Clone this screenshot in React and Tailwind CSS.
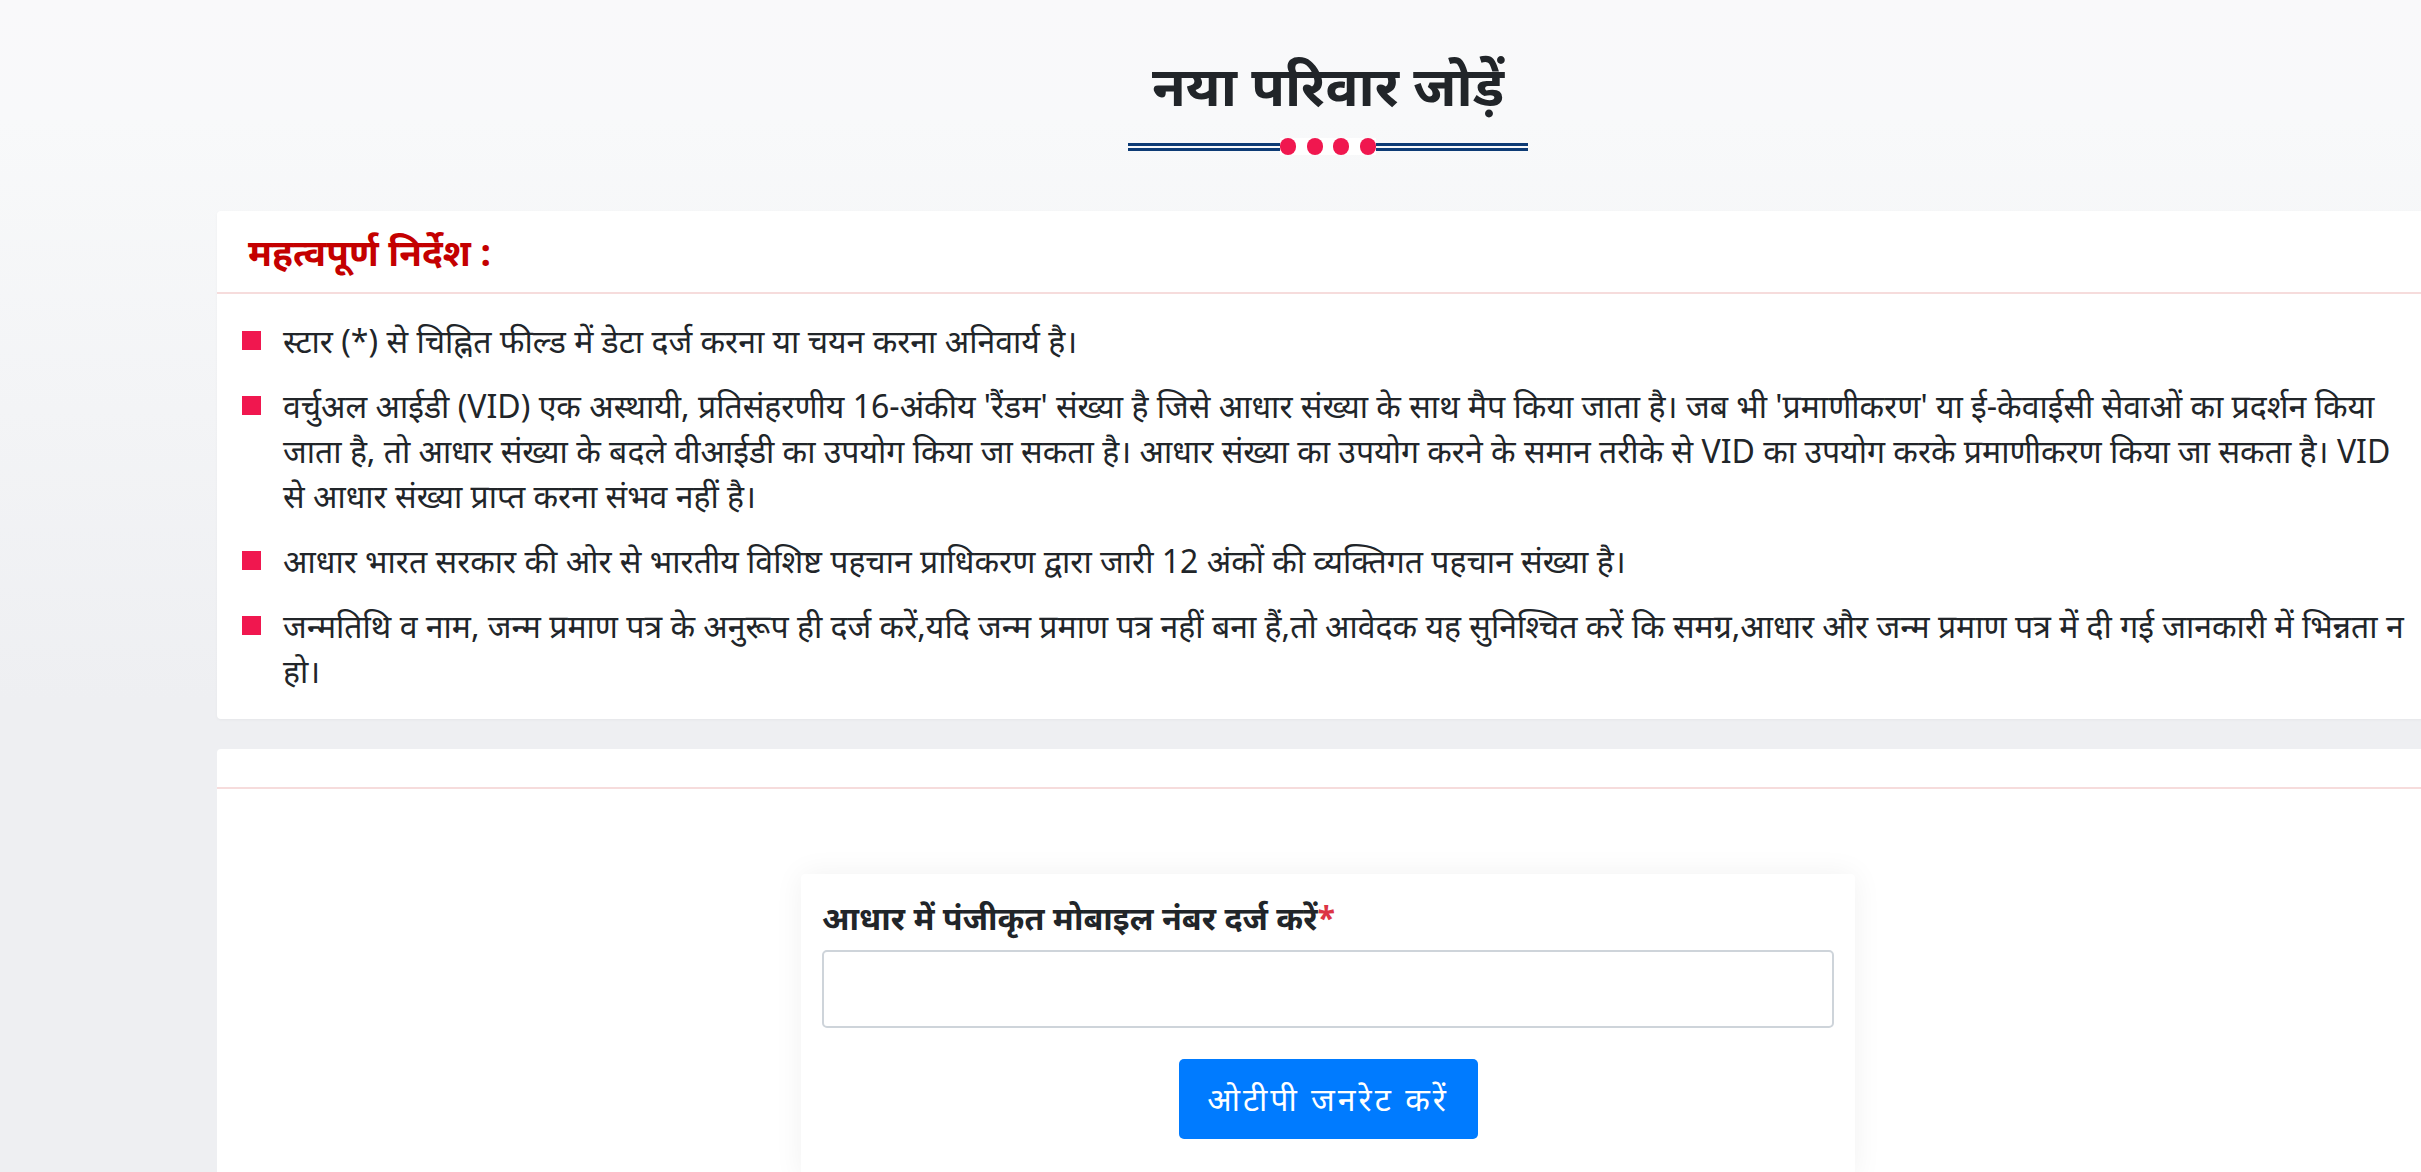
import React from 'react'

const instructions = [
  "स्टार (*) से चिह्नित फील्ड में डेटा दर्ज करना या चयन करना अनिवार्य है।",
  "वर्चुअल आईडी (VID) एक अस्थायी, प्रतिसंहरणीय 16-अंकीय 'रैंडम' संख्या है जिसे आधार संख्या के साथ मैप किया जाता है। जब भी 'प्रमाणीकरण' या ई-केवाईसी सेवाओं का प्रदर्शन किया जाता है, तो आधार संख्या के बदले वीआईडी का उपयोग किया जा सकता है। आधार संख्या का उपयोग करने के समान तरीके से VID का उपयोग करके प्रमाणीकरण किया जा सकता है। VID से आधार संख्या प्राप्त करना संभव नहीं है।",
  "आधार भारत सरकार की ओर से भारतीय विशिष्ट पहचान प्राधिकरण द्वारा जारी 12 अंकों की व्यक्तिगत पहचान संख्या है।",
  "जन्मतिथि व नाम, जन्म प्रमाण पत्र के अनुरूप ही दर्ज करें,यदि जन्म प्रमाण पत्र नहीं बना हैं,तो आवेदक यह सुनिश्चित करें कि समग्र,आधार और जन्म प्रमाण पत्र में दी गई जानकारी में भिन्नता न हो।",
]

const App = () => {
  const [mobile, setMobile] = React.useState('')

  return (
    <div className="w-full h-[1172px] overflow-hidden bg-[linear-gradient(180deg,#f9f9fa_0px,#f8f9fa_120px,#eeeff2_700px)] font-['Noto_Sans','Noto_Sans_Devanagari',sans-serif] text-[#212529]">
      <div className="ml-[217px] w-[2222px]">
        {/* heading */}
        <div className="pt-[52px] flex flex-col items-center">
          <h1 className="text-[55px] leading-[66px] font-bold text-[#212529]">नया परिवार जोड़ें</h1>
          <div className="mt-[20px] w-[400px] h-[17px] flex items-center">
            <div className="flex-1 h-[8px] border-y-[3px] border-[#0d3b75]"></div>
            <div className="bg-white flex gap-[10.5px]">
              <span className="w-[16px] h-[17px] rounded-full bg-[#f0174f]"></span>
              <span className="w-[16px] h-[17px] rounded-full bg-[#f0174f]"></span>
              <span className="w-[16px] h-[17px] rounded-full bg-[#f0174f]"></span>
              <span className="w-[16px] h-[17px] rounded-full bg-[#f0174f]"></span>
            </div>
            <div className="flex-1 h-[8px] border-y-[3px] border-[#0d3b75]"></div>
          </div>
        </div>

        {/* instructions card */}
        <div className="mt-[56px] bg-white rounded-[4px] shadow-[0_1px_3px_rgba(0,0,0,0.04)]">
          <div className="h-[83px] flex items-center px-[31px] border-b-2 border-[#f6dcdc]">
            <h2 className="text-[37px] font-bold text-[#c40000] leading-[1.5]">महत्वपूर्ण निर्देश :</h2>
          </div>
          <ul className="pt-[24px] pb-[26px] pl-[25px] pr-[25px] flex flex-col gap-[20px]">
            {instructions.map((item, index) => (
              <li key={index} className="flex gap-[22px] text-[32px] leading-[45px]">
                <span className="mt-[13px] w-[19px] h-[19px] shrink-0 bg-[#f0174f]"></span>
                <span>{item}</span>
              </li>
            ))}
          </ul>
        </div>

        {/* form card */}
        <div className="mt-[30px] bg-white rounded-[4px] h-[600px]">
          <div className="h-[40px] border-b-2 border-[#f6dcdc]"></div>
          <div className="pt-[85px] flex justify-center">
            <div className="w-[1054px] bg-white rounded-[4px] px-[21px] pt-[22px] pb-[40px] shadow-[0_0_30px_rgba(0,0,0,0.06)]">
              <label className="block text-[32.3px] leading-[42px] font-bold text-[#212529]">
                आधार में पंजीकृत मोबाइल नंबर दर्ज करें<span className="text-[#dc3545]">*</span>
              </label>
              <input
                type="text"
                value={mobile}
                onChange={(e) => setMobile(e.target.value)}
                className="mt-[12px] block w-full h-[78px] border-2 border-[#ced4da] rounded-[5px] px-4 text-[28px] outline-none"
              />
              <div className="mt-[31px] flex justify-center">
                <button className="w-[299px] h-[80px] bg-[#007bff] text-white text-[32px] tracking-[3px] rounded-[5px]">
                  ओटीपी जनरेट करें
                </button>
              </div>
            </div>
          </div>
        </div>
      </div>
    </div>
  )
}

export default App
